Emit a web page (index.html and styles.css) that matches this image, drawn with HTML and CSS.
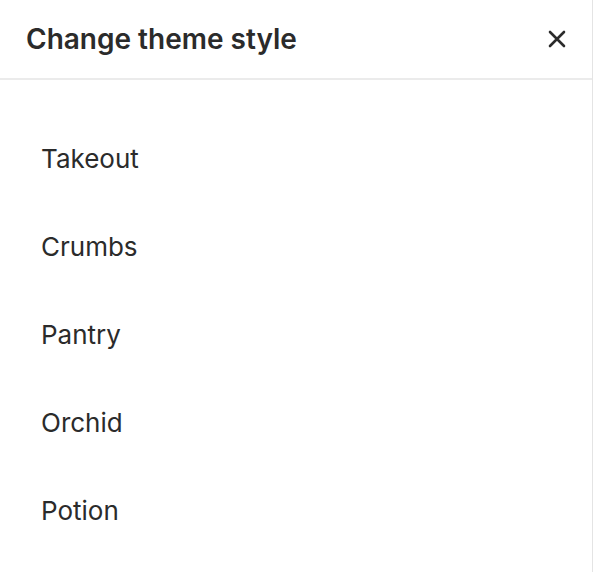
FILE: index.html
```html
<!DOCTYPE html>
<html lang="en">
<head>
<meta charset="utf-8">
<title>Change theme style</title>
<link rel="stylesheet" href="styles.css">
</head>
<body>
<aside class="panel">
  <header class="panel-header">
    <h1 class="panel-title">Change theme style</h1>
    <button class="close-btn" aria-label="Close">
      <svg width="18" height="18" viewBox="0 0 18 18"><path d="M2 2L16 16M16 2L2 16" stroke="#2b2b2b" stroke-width="2.6" stroke-linecap="round"/></svg>
    </button>
  </header>
  <ul class="theme-list">
    <li class="theme-item">Takeout</li>
    <li class="theme-item">Crumbs</li>
    <li class="theme-item">Pantry</li>
    <li class="theme-item">Orchid</li>
    <li class="theme-item">Potion</li>
  </ul>
</aside>
</body>
</html>
```
FILE: styles.css
```css
html, body {
  margin: 0;
  padding: 0;
  background: #ffffff;
}
body {
  font-family: Inter, "Noto Sans", "Liberation Sans", sans-serif;
  color: #2b2b2b;
}
.panel {
  width: 592px;
  height: 572px;
  border-right: 1px solid #e4e4e4;
  box-sizing: content-box;
}
.panel-header {
  height: 80px;
  box-sizing: border-box;
  border-bottom: 2px solid #ebebeb;
  display: flex;
  align-items: center;
  justify-content: space-between;
  padding: 0 26px 0 26px;
}
.panel-title {
  margin: 0;
  font-size: 28px;
  font-weight: 600;
  letter-spacing: 0;
  color: #2b2b2b;
}
.close-btn {
  border: 0;
  background: none;
  padding: 0;
  width: 18px;
  height: 18px;
  display: flex;
  cursor: pointer;
}
.theme-list {
  list-style: none;
  margin: 0;
  padding: 34px 0 0 41px;
  display: flex;
  flex-direction: column;
}
.theme-item {
  height: 88px;
  display: flex;
  align-items: center;
  font-size: 26px;
  font-weight: 400;
  color: #2b2b2b;
}
```
